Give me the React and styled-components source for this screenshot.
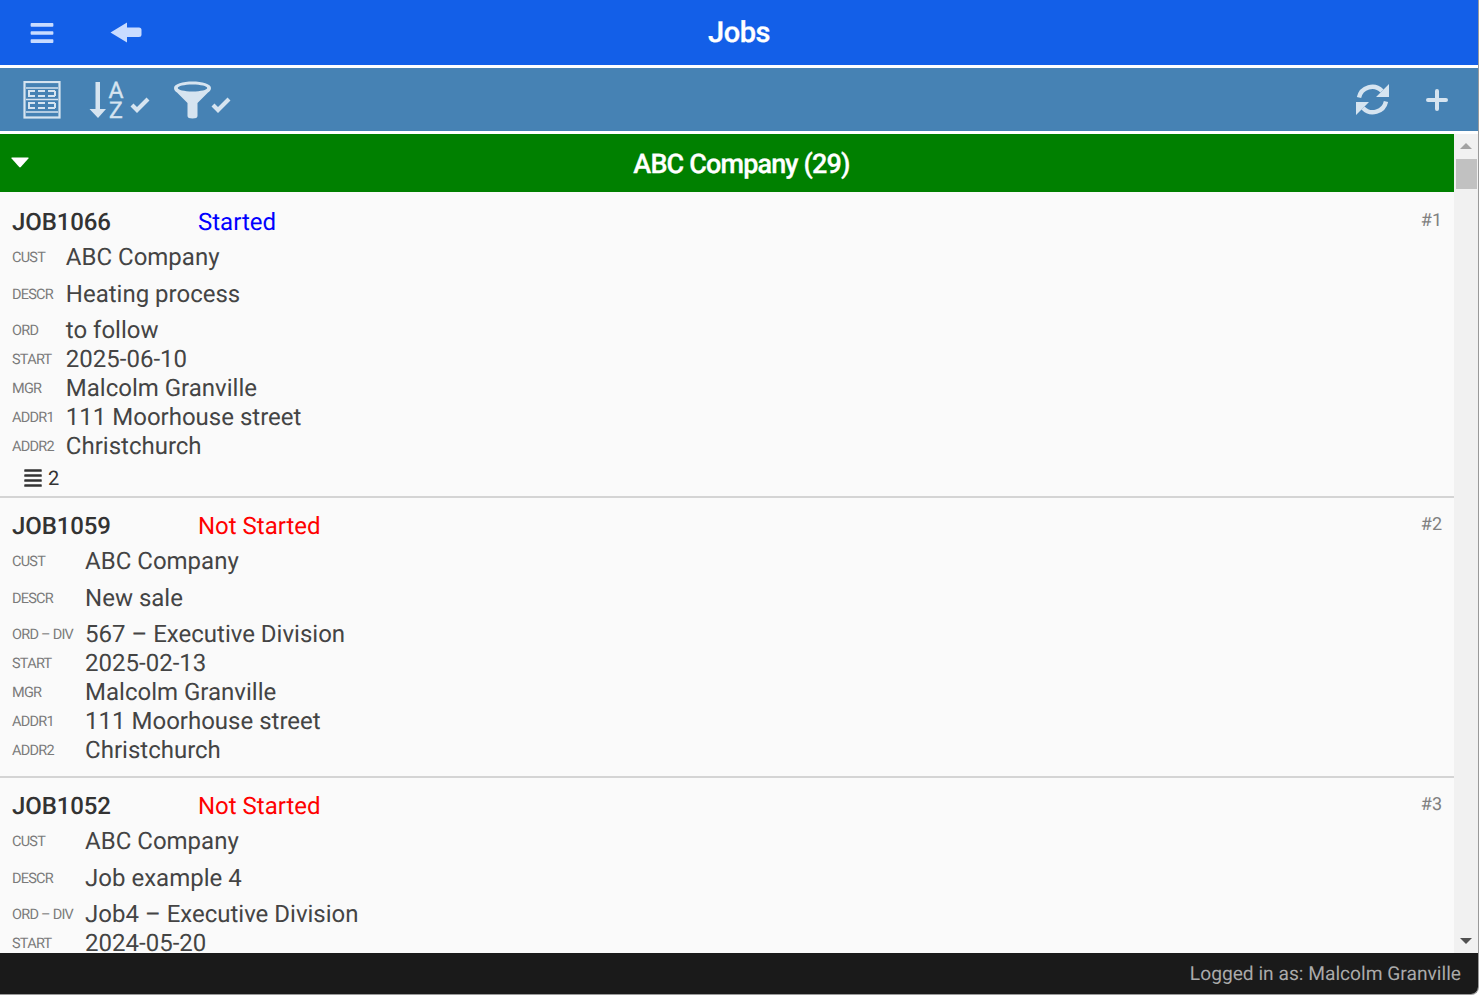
import React from "react";
import styled, { createGlobalStyle } from "styled-components";
import { FaBars, FaAlignJustify } from "react-icons/fa";

const GlobalStyle = createGlobalStyle`
  html, body {
    margin: 0;
    height: 100%;
    background: #fff;
    font-family: Roboto, "Liberation Sans", sans-serif;
    text-rendering: geometricPrecision;
    overflow: hidden;
  }
`;

const Page = styled.div`
  display: flex;
  flex-direction: column;
  height: 994px;
  border-right: 1px solid #9a9a9a;
  border-bottom: 1px solid #9a9a9a;
  border-bottom-right-radius: 8px;
  overflow: hidden;
`;

const Header = styled.header`
  height: 65px;
  flex: none;
  background: #135fe8;
  border-bottom: 3px solid #fff;
  display: flex;
  align-items: center;
  position: relative;
  color: #c9dcff;
`;

const HeaderIcon = styled.span`
  display: flex;
  margin-left: ${(p) => p.$left}px;
`;

const Title = styled.h1`
  position: absolute;
  left: 0;
  right: 0;
  top: 15px;
  margin: 0;
  text-align: center;
  font-size: 29px;
  line-height: 36px;
  font-weight: 500;
  letter-spacing: -0.5px;
  -webkit-text-stroke: 0.3px #fff;
  color: #fff;
`;

const Toolbar = styled.div`
  height: 63px;
  flex: none;
  background: #4682b4;
  border-bottom: 3px solid #fff;
  display: flex;
  align-items: center;
  color: #d6e4f0;
`;

const ToolIcon = styled.span`
  display: flex;
  margin-left: ${(p) => p.$left || 0}px;
  margin-right: ${(p) => p.$right || 0}px;
`;

const Spacer = styled.div`
  flex: 1;
`;

const Body = styled.div`
  flex: 1;
  min-height: 0;
  display: flex;
  background: #fafafa;
`;

const List = styled.div`
  flex: 1;
  min-width: 0;
  overflow: hidden;
`;

const Group = styled.div`
  height: 58px;
  background: #008000;
  display: flex;
  align-items: center;
  position: relative;
  color: #fff;
`;

const GroupCaret = styled.svg`
  margin-left: 11px;
  margin-top: -2px;
`;

const GroupTitle = styled.div`
  position: absolute;
  left: 0;
  top: 12px;
  width: 1483px;
  text-align: center;
  font-size: 27px;
  line-height: 36px;
  font-weight: 500;
  letter-spacing: -0.85px;
  -webkit-text-stroke: 0.3px #fff;
`;

const Job = styled.article`
  position: relative;
  padding: ${(p) => (p.$first ? 10 : 8)}px 0 12px 12px;
  border-bottom: 2px solid #d4d4d4;
  color: #444;
`;

const JobHead = styled.div`
  display: flex;
  align-items: center;
  height: 39px;
`;

const JobCode = styled.div`
  width: 186px;
  font-size: 24px;
  font-weight: 500;
  letter-spacing: -0.1px;
  color: #333;
`;

const JobStatus = styled.div`
  font-size: 24px;
  color: ${(p) => (p.$started ? "#0000ff" : "#ff0000")};
`;

const JobNumber = styled.div`
  position: absolute;
  top: ${(p) => (p.$first ? 17 : 15)}px;
  right: 12px;
  font-size: 18px;
  line-height: 24px;
  color: #808080;
`;

const Fields = styled.div`
  display: grid;
  grid-template-columns: auto 1fr;
  column-gap: 12px;
`;

const Label = styled.div`
  display: flex;
  align-items: center;
  box-sizing: border-box;
  height: ${(p) => p.$height}px;
  padding-top: 2px;
  font-size: 14.5px;
  letter-spacing: -0.75px;
  color: #7a7a7a;
  white-space: nowrap;
`;

const Value = styled.div`
  display: flex;
  align-items: center;
  height: ${(p) => p.$height}px;
  font-size: 24px;
  white-space: nowrap;
`;

const Tasks = styled.div`
  display: flex;
  align-items: center;
  gap: 5px;
  height: 24px;
  margin: 6px 0 -6px 11px;
  font-size: 20px;
  color: #333;
`;

const Scrollbar = styled.div`
  width: 24px;
  flex: none;
  background: #f1f1f1;
  display: flex;
  flex-direction: column;
  align-items: center;
  position: relative;
`;

const ScrollArrow = styled.div`
  position: absolute;
  left: 6px;
  ${(p) => (p.$down ? "bottom: 9px;" : "top: 9px;")}
  width: 0;
  height: 0;
  border-left: 6px solid transparent;
  border-right: 6px solid transparent;
  ${(p) =>
    p.$down
      ? "border-top: 6px solid #505050;"
      : "border-bottom: 6px solid #a3a3a3;"}
`;

const ScrollThumb = styled.div`
  position: absolute;
  top: 25px;
  left: 2px;
  width: 21px;
  height: 30px;
  background: #c1c1c1;
`;

const Footer = styled.footer`
  height: 41px;
  flex: none;
  background: #1a1a1a;
  color: #aaa;
  font-size: 19.2px;
  display: flex;
  align-items: center;
  justify-content: flex-end;
  padding-right: 17px;
`;

const BackArrow = () => (
  <svg width="32" height="21" viewBox="0 0 32 21" fill="currentColor">
    <path d="M0.5 10.5 L17 0.5 V5.5 H29 Q31.5 5.5 31.5 8 V13 Q31.5 15 29 15 H17 V20.5 Z" />
  </svg>
);

const GridIcon = () => (
  <svg width="38" height="38" viewBox="0 0 38 38" fill="none" stroke="currentColor">
    <rect x="1.5" y="1" width="35" height="35.5" strokeWidth="2.2" />
    <path d="M3 7 H35 M3 18.5 H35 M3 31 H35" strokeWidth="1.5" />
    <path d="M6 10 V15 M32 10 V15 M6 22 V27 M32 22 V27" strokeWidth="2" />
    <path d="M5 10 H33 M5 15 H33 M5 22 H33 M5 27 H33" strokeWidth="2" strokeDasharray="7 3" />
  </svg>
);

const Check = ({ x, y }) => (
  <path
    d={`M${x} ${y + 8} L${x + 5} ${y + 13} L${x + 16} ${y + 2}`}
    fill="none"
    stroke="currentColor"
    strokeWidth="4.2"
  />
);

const SortIcon = () => (
  <svg width="62" height="38" viewBox="0 0 62 38" fill="currentColor" overflow="visible">
    <path d="M6.5 1 H11 V28 H17 L9 37 L0.5 28 H6.5 Z" />
    <text x="27" y="16.5" fontFamily="Roboto, sans-serif" fontSize="23" textAnchor="middle" stroke="currentColor" strokeWidth="0.4">A</text>
    <text x="27" y="36.5" fontFamily="Roboto, sans-serif" fontSize="23" textAnchor="middle" stroke="currentColor" strokeWidth="0.4">Z</text>
    <Check x={43} y={16} />
  </svg>
);

const FunnelIcon = () => (
  <svg width="58" height="38" viewBox="0 0 58 38" fill="currentColor">
    <path
      fillRule="evenodd"
      d="M18.5 0.5 C28 0.5 37 3 37 7 C37 9 35.5 10.5 34 11.5 L23.5 22 V35 Q23.5 37.5 18.5 37.5 Q13.5 37.5 13.5 35 V22 L3 11.5 C1.5 10.5 0 9 0 7 C0 3 9 0.5 18.5 0.5 Z M18.5 3.5 C10 3.5 3.8 5.2 3.8 7 C3.8 8.8 10 10.5 18.5 10.5 C27 10.5 33.2 8.8 33.2 7 C33.2 5.2 27 3.5 18.5 3.5 Z"
    />
    <Check x={39} y={16} />
  </svg>
);

const RefreshIcon = () => (
  <svg width="33" height="33" viewBox="0 0 33 33" fill="currentColor">
    <path
      d="M3 14.5 A13.5 13.5 0 0 1 26 8 M30 18.5 A13.5 13.5 0 0 1 7 25"
      fill="none"
      stroke="currentColor"
      strokeWidth="4.4"
    />
    <path d="M33 1 V14 H20 Z M0 32 V19 H13 Z" />
  </svg>
);

const PlusIcon = () => (
  <svg width="22" height="22" viewBox="0 0 22 22" stroke="currentColor" strokeWidth="4" strokeLinecap="round">
    <path d="M11 2 V20 M2 11 H20" />
  </svg>
);

const jobs = [
  {
    code: "JOB1066",
    status: "Started",
    orderLabel: "ORD",
    order: "to follow",
    descr: "Heating process",
    start: "2025-06-10",
    tasks: 2,
  },
  {
    code: "JOB1059",
    status: "Not Started",
    orderLabel: "ORD – DIV",
    order: "567 – Executive Division",
    descr: "New sale",
    start: "2025-02-13",
  },
  {
    code: "JOB1052",
    status: "Not Started",
    orderLabel: "ORD – DIV",
    order: "Job4 – Executive Division",
    descr: "Job example 4",
    start: "2024-05-20",
  },
];

const App = () => {
  return (
    <>
      <GlobalStyle />
      <Page>
        <Header>
          <HeaderIcon $left={29}>
            <FaBars size={26} />
          </HeaderIcon>
          <HeaderIcon $left={55}>
            <BackArrow />
          </HeaderIcon>
          <Title>Jobs</Title>
        </Header>

        <Toolbar>
          <ToolIcon $left={23}>
            <GridIcon />
          </ToolIcon>
          <ToolIcon $left={28}>
            <SortIcon />
          </ToolIcon>
          <ToolIcon $left={23}>
            <FunnelIcon />
          </ToolIcon>
          <Spacer />
          <ToolIcon $right={37}>
            <RefreshIcon />
          </ToolIcon>
          <ToolIcon $right={30}>
            <PlusIcon />
          </ToolIcon>
        </Toolbar>

        <Body>
          <List>
            <Group>
              <GroupCaret width="18" height="11" viewBox="0 0 18 11" fill="#fff">
                <path d="M1 0.5 H17 Q18 0.5 17.4 1.5 L9.8 10 Q9 10.8 8.2 10 L0.6 1.5 Q0 0.5 1 0.5 Z" />
              </GroupCaret>
              <GroupTitle>ABC Company (29)</GroupTitle>
            </Group>

            {jobs.map((job, i) => (
              <Job key={job.code} $first={i === 0}>
                <JobHead>
                  <JobCode>{job.code}</JobCode>
                  <JobStatus $started={job.status === "Started"}>{job.status}</JobStatus>
                </JobHead>
                <JobNumber $first={i === 0}>#{i + 1}</JobNumber>
                <Fields>
                  <Label $height={31}>CUST</Label>
                  <Value $height={31}>ABC Company</Value>
                  <Label $height={43}>DESCR</Label>
                  <Value $height={43}>{job.descr}</Value>
                  <Label $height={29}>{job.orderLabel}</Label>
                  <Value $height={29}>{job.order}</Value>
                  <Label $height={29}>START</Label>
                  <Value $height={29}>{job.start}</Value>
                  <Label $height={29}>MGR</Label>
                  <Value $height={29}>Malcolm Granville</Value>
                  <Label $height={29}>ADDR1</Label>
                  <Value $height={29}>111 Moorhouse street</Value>
                  <Label $height={29}>ADDR2</Label>
                  <Value $height={29}>Christchurch</Value>
                </Fields>
                {job.tasks && (
                  <Tasks>
                    <FaAlignJustify size={20} />
                    {job.tasks}
                  </Tasks>
                )}
              </Job>
            ))}
          </List>

          <Scrollbar>
            <ScrollArrow />
            <ScrollThumb />
            <ScrollArrow $down />
          </Scrollbar>
        </Body>

        <Footer>Logged in as: Malcolm Granville</Footer>
      </Page>
    </>
  );
};

export default App;
